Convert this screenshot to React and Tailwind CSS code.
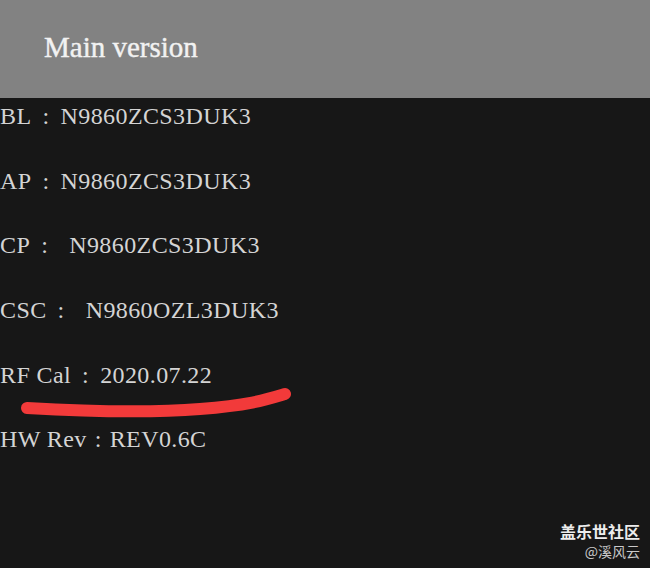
import React from "react";

const rows = [
  { label: "BL", colon: "ml-[11px]", value: "N9860ZCS3DUK3", gap: "ml-[11px]" },
  { label: "AP", colon: "ml-[11px]", value: "N9860ZCS3DUK3", gap: "ml-[11px]" },
  { label: "CP", colon: "ml-[11px]", value: "N9860ZCS3DUK3", gap: "ml-[21px]" },
  { label: "CSC", colon: "ml-[11px]", value: "N9860OZL3DUK3", gap: "ml-[21px]" },
  { label: "RF Cal", colon: "ml-[11px]", value: "2020.07.22", gap: "ml-[11px]" },
  { label: "HW Rev", colon: "ml-[8px]", value: "REV0.6C", gap: "ml-[8px]" },
];

const App = () => {
  return (
    <div className="relative w-[650px] h-[568px] bg-[#171717] overflow-hidden font-['Liberation_Serif',serif]">
      {/* Header */}
      <div className="h-[98px] bg-[#828282] flex items-center pl-[44px] pb-[2px]">
        <h1 className="text-[29px] text-[#f2f2f2] [-webkit-text-stroke:0.4px_#f2f2f2]">Main version</h1>
      </div>

      {/* Rows */}
      <div className="pt-[4px]">
        {rows.map((r) => (
          <div key={r.label} className="h-[64.7px] text-[24px] leading-[28px] tracking-[0.4px] text-[#d4d4d4] whitespace-pre">
            {r.label}
            <span className={r.colon}>:</span>
            <span className={r.gap}>{r.value}</span>
          </div>
        ))}
      </div>

      {/* Red marker stroke */}
      <svg className="absolute left-0 top-0 pointer-events-none" width="650" height="568">
        <path
          d="M27 408 C 80 411, 150 413, 200 409 S 265 400, 285 394"
          fill="none"
          stroke="#f23a3a"
          strokeWidth="12"
          strokeLinecap="round"
        />
      </svg>

      {/* Watermark */}
      <div className="absolute right-[10px] bottom-[8px] flex flex-col items-end gap-[2px] font-['Noto_Sans_CJK_SC',sans-serif]">
        <span className="text-[16px] leading-[19px] font-bold text-[#ededed]">盖乐世社区</span>
        <span className="text-[14px] leading-[17px] text-[#c9c9c9]">@溪风云</span>
      </div>
    </div>
  );
};

export default App;
